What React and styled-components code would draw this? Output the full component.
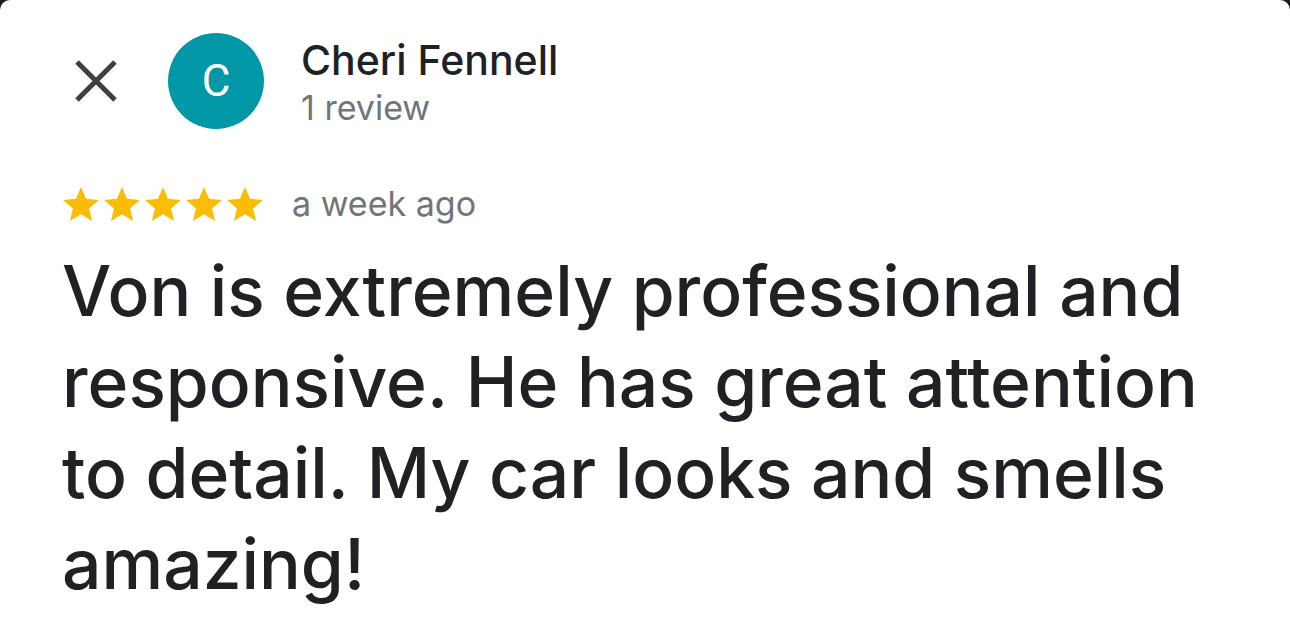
import React from "react";
import styled, { createGlobalStyle } from "styled-components";

const GlobalStyle = createGlobalStyle`
  html, body {
    margin: 0;
    padding: 0;
    background: #1b1b1b;
  }
  #root {
    height: 639px;
  }
`;

const Card = styled.div`
  height: 639px;
  box-sizing: border-box;
  background: #ffffff;
  border-radius: 10px 10px 0 0;
  padding: 33px 0 0 62px;
  overflow: hidden;
`;

const Header = styled.div`
  display: flex;
  align-items: center;
`;

const CloseButton = styled.button`
  width: 60px;
  height: 60px;
  margin-left: 4px;
  border: none;
  background: none;
  padding: 0;
  display: flex;
  align-items: center;
  justify-content: center;
  cursor: pointer;
`;

const Avatar = styled.div`
  width: 96px;
  height: 96px;
  border-radius: 50%;
  background: #0097a7;
  color: #ffffff;
  margin-left: 42px;
  display: flex;
  align-items: center;
  justify-content: center;
  font-family: Roboto, "Liberation Sans", sans-serif;
  font-size: 44px;
`;

const Author = styled.div`
  margin-left: 37px;
  margin-top: 1px;
  display: flex;
  flex-direction: column;
  gap: 4px;
`;

const Name = styled.div`
  font-family: Inter, Roboto, sans-serif;
  font-size: 41px;
  font-weight: 500;
  color: #202124;
  line-height: 48px;
`;

const Meta = styled.div`
  font-family: Inter, Roboto, sans-serif;
  font-size: 34px;
  color: #70757a;
  line-height: 40px;
`;

const RatingRow = styled.div`
  display: flex;
  align-items: center;
  margin-top: 55px;
`;

const Stars = styled.div`
  display: flex;
  gap: 5px;
  margin-right: 29px;
  margin-left: 1px;
`;

const Body = styled.p`
  margin: 22px 0 0 0;
  font-family: Inter, sans-serif;
  font-size: 69.5px;
  line-height: 91px;
  color: #202124;
  font-weight: 500;
  max-width: 1205px;
`;

const Star = () => (
  <svg width="36" height="34" viewBox="2 2 20 19">
    <path
      fill="#fbbc04"
      d="M12 17.27L18.18 21l-1.64-7.03L22 9.24l-7.19-.61L12 2 9.19 8.63 2 9.24l5.46 4.73L5.82 21z"
    />
  </svg>
);

export default function App() {
  return (
    <>
      <GlobalStyle />
      <Card>
        <Header>
          <CloseButton aria-label="Close">
            <svg width="44" height="44" viewBox="0 0 44 44">
              <path d="M3 3L41 41M41 3L3 41" stroke="#3c4043" strokeWidth="5" />
            </svg>
          </CloseButton>
          <Avatar>C</Avatar>
          <Author>
            <Name>Cheri Fennell</Name>
            <Meta>1 review</Meta>
          </Author>
        </Header>
        <RatingRow>
          <Stars>
            {[0, 1, 2, 3, 4].map((i) => (
              <Star key={i} />
            ))}
          </Stars>
          <Meta>a week ago</Meta>
        </RatingRow>
        <Body>
          Von is extremely professional and responsive. He has great attention
          to detail. My car looks and smells amazing!
        </Body>
      </Card>
    </>
  );
}
